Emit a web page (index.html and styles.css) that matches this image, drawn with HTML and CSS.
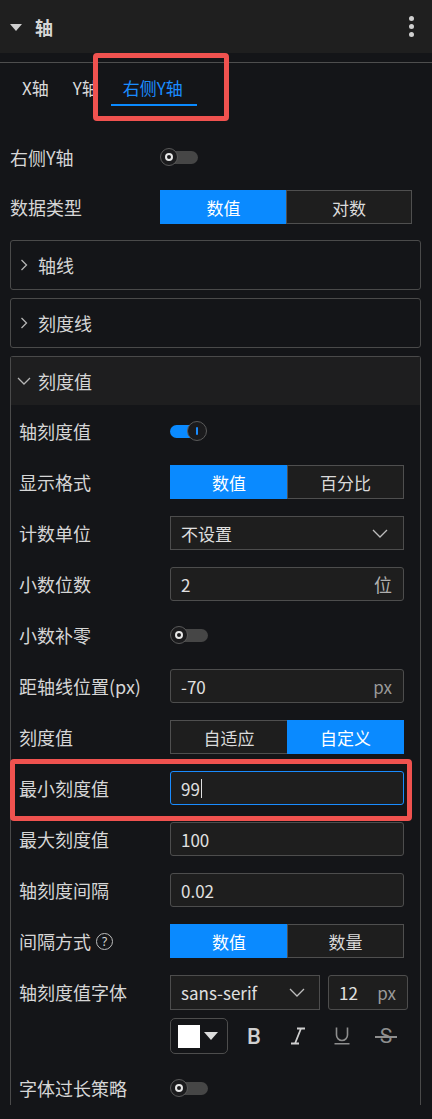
FILE: index.html
```html
<!DOCTYPE html>
<html lang="zh">
<head>
    <meta charset="UTF-8">
    <meta name="viewport" content="width=device-width, initial-scale=1.0">
    <title>轴</title>
    <link rel="stylesheet" href="styles.css">
</head>
<body>
    <div class="bar">
        <span class="bar-caret"></span>
        <span class="bar-title">轴</span>
        <span class="kebab"><i></i><i></i><i></i></span>
    </div>

    <div class="tabs">
        <span class="tab">X轴</span>
        <span class="tab">Y轴</span>
        <span class="tab active mark">右侧Y轴</span>
    </div>

    <div class="content">
        <div class="row">
            <span class="label">右侧Y轴</span>
            <span class="switch"><span class="knob"></span></span>
        </div>
        <div class="row">
            <span class="label">数据类型</span>
            <div class="seg">
                <span class="seg-item on">数值</span>
                <span class="seg-item">对数</span>
            </div>
        </div>

        <div class="panels">
            <section class="panel">
                <div class="panel-head">
                    <svg class="chev-r" width="8" height="12" viewBox="0 0 8 12"><polyline points="1.5,1 6.5,6 1.5,11" fill="none" stroke="#b5b5b5" stroke-width="1.3"/></svg>
                    <span>轴线</span>
                </div>
            </section>
            <section class="panel">
                <div class="panel-head">
                    <svg class="chev-r" width="8" height="12" viewBox="0 0 8 12"><polyline points="1.5,1 6.5,6 1.5,11" fill="none" stroke="#b5b5b5" stroke-width="1.3"/></svg>
                    <span>刻度线</span>
                </div>
            </section>
            <section class="panel open">
                <div class="panel-head">
                    <svg class="chev-d" width="14" height="8" viewBox="0 0 14 8"><polyline points="1,1 7,7 13,1" fill="none" stroke="#b5b5b5" stroke-width="1.3"/></svg>
                    <span>刻度值</span>
                </div>
                <div class="panel-body">
                    <div class="row">
                        <span class="label">轴刻度值</span>
                        <span class="switch on"><span class="knob"></span></span>
                    </div>
                    <div class="row">
                        <span class="label">显示格式</span>
                        <div class="seg">
                            <span class="seg-item on">数值</span>
                            <span class="seg-item">百分比</span>
                        </div>
                    </div>
                    <div class="row">
                        <span class="label">计数单位</span>
                        <div class="field">
                            <span class="value">不设置</span>
                            <svg width="16" height="9" viewBox="0 0 16 9"><polyline points="1,1 8,8 15,1" fill="none" stroke="#bdbdbd" stroke-width="1.3"/></svg>
                        </div>
                    </div>
                    <div class="row">
                        <span class="label">小数位数</span>
                        <div class="field round">
                            <span class="value">2</span>
                            <span class="unit unit-cn">位</span>
                        </div>
                    </div>
                    <div class="row">
                        <span class="label">小数补零</span>
                        <span class="switch"><span class="knob"></span></span>
                    </div>
                    <div class="row">
                        <span class="label">距轴线位置(px)</span>
                        <div class="field round">
                            <span class="value">-70</span>
                            <span class="unit">px</span>
                        </div>
                    </div>
                    <div class="row">
                        <span class="label">刻度值</span>
                        <div class="seg">
                            <span class="seg-item">自适应</span>
                            <span class="seg-item on">自定义</span>
                        </div>
                    </div>
                    <div class="row mark-row">
                        <span class="label">最小刻度值</span>
                        <div class="field round focus">
                            <span class="value">99<span class="caret"></span></span>
                        </div>
                    </div>
                    <div class="row">
                        <span class="label">最大刻度值</span>
                        <div class="field round"><span class="value">100</span></div>
                    </div>
                    <div class="row">
                        <span class="label">轴刻度间隔</span>
                        <div class="field round"><span class="value">0.02</span></div>
                    </div>
                    <div class="row">
                        <span class="label">间隔方式 <span class="help">?</span></span>
                        <div class="seg">
                            <span class="seg-item on">数值</span>
                            <span class="seg-item">数量</span>
                        </div>
                    </div>
                    <div class="row tall">
                        <span class="label">轴刻度值字体</span>
                        <div class="font-ctl">
                            <div class="font-line">
                                <div class="field family">
                                    <span class="value">sans-serif</span>
                                    <svg width="16" height="9" viewBox="0 0 16 9"><polyline points="1,1 8,8 15,1" fill="none" stroke="#bdbdbd" stroke-width="1.3"/></svg>
                                </div>
                                <div class="field round size">
                                    <span class="value">12</span>
                                    <span class="unit">px</span>
                                </div>
                            </div>
                            <div class="style-line">
                                <span class="color-btn">
                                    <span class="swatch"></span>
                                    <svg width="14" height="9" viewBox="0 0 14 9"><polygon points="0,0 14,0 7,8" fill="#dcdcdc"/></svg>
                                </span>
                                <span class="tool bold">B</span>
                                <span class="tool">
                                    <svg width="16" height="18" viewBox="0 0 16 18"><path d="M7 1.5h8M1 16.5h8M11 1.5L5 16.5" fill="none" stroke="#cfcfcf" stroke-width="1.8"/></svg>
                                </span>
                                <span class="tool">
                                    <svg width="16" height="18" viewBox="0 0 16 18"><path d="M2.5 0.5v7.5a5.5 5.5 0 0 0 11 0v-7.5M0.5 16.8h15" fill="none" stroke="#8e8e8e" stroke-width="1.6"/></svg>
                                </span>
                                <span class="tool strike">S</span>
                            </div>
                        </div>
                    </div>
                    <div class="row">
                        <span class="label">字体过长策略</span>
                        <span class="switch"><span class="knob"></span></span>
                    </div>
                </div>
            </section>
        </div>
    </div>
</body>
</html>
```

FILE: styles.css
```css
body {
    margin: 0;
    background: #141518;
    color: #d6d6d6;
    font-family: "Noto Sans CJK SC", "Noto Sans", sans-serif;
    height: 1119px;
    overflow: hidden;
}

.bar {
    height: 53px;
    background: #1f1f1f;
    display: flex;
    align-items: center;
    padding: 0 10px;
}

.bar-caret {
    width: 0;
    height: 0;
    border-left: 6px solid transparent;
    border-right: 6px solid transparent;
    border-top: 7px solid #cfcfcf;
    margin-top: 2px;
}

.bar-title {
    margin-left: 13px;
    font-size: 18px;
    font-weight: bold;
    line-height: 24px;
}

.kebab {
    margin-left: auto;
    display: flex;
    flex-direction: column;
    gap: 3px;
    margin-right: 8px;
}

.kebab i {
    width: 5px;
    height: 5px;
    border-radius: 50%;
    background: #d0d0d0;
}

.tabs {
    margin-top: 9px;
    border-top: 1px solid #4e4e4e;
    display: flex;
    padding-left: 10px;
}

.tab {
    padding: 13px 12px 4px;
    font-size: 17px;
    line-height: 24px;
    border-bottom: 2px solid transparent;
    color: #dadada;
}

.tab.active {
    color: #1a8cff;
    border-bottom-color: #0a8aff;
    padding-right: 14px;
}

.mark {
    position: relative;
}

.mark::after,
.mark-row::after {
    content: "";
    position: absolute;
    border: 5px solid #f0524f;
    border-radius: 4px;
}

.mark::after {
    top: -10px;
    left: -18px;
    right: -32px;
    bottom: -17px;
}

.content {
    padding: 34px 11px 0 10px;
    display: flex;
    flex-direction: column;
    gap: 16px;
}

.row {
    display: grid;
    grid-template-columns: 150px 1fr;
    align-items: center;
    height: 34px;
    margin-right: 9px;
}

.label {
    font-size: 18px;
    line-height: 24px;
    display: flex;
    align-items: center;
    white-space: nowrap;
}

.help {
    width: 15px;
    height: 15px;
    border: 1.5px solid #bdbdbd;
    border-radius: 50%;
    font-size: 12px;
    line-height: 15px;
    text-align: center;
    margin-left: 5px;
    font-family: "Noto Sans", sans-serif;
}

/* switch */
.switch {
    position: relative;
    width: 38px;
    height: 19px;
}

.switch::before {
    content: "";
    position: absolute;
    left: 6px;
    right: 0;
    top: 3px;
    height: 13px;
    border-radius: 7px;
    background: #464646;
}

.knob {
    position: absolute;
    left: 0;
    top: 0;
    width: 16px;
    height: 16px;
    border-radius: 50%;
    border: 1.5px solid #5a5a5a;
    background: #1b1b1d;
}

.knob::after {
    content: "";
    position: absolute;
    left: 4px;
    top: 4px;
    width: 4px;
    height: 4px;
    border: 2px solid #e6e6e6;
    border-radius: 50%;
}

.switch.on::before {
    left: 0;
    right: 12px;
    background: #0a8aff;
}

.switch.on .knob {
    left: 17px;
    top: -1px;
    width: 18px;
    height: 18px;
}

.switch.on .knob::after {
    left: 8px;
    top: 5px;
    width: 2px;
    height: 8px;
    border: none;
    border-radius: 1px;
    background: #1a8cff;
}

/* segmented */
.seg {
    display: grid;
    grid-template-columns: 1fr 1fr;
    height: 34px;
}

.seg-item {
    display: flex;
    align-items: center;
    justify-content: center;
    font-size: 17px;
    background: #1e1e1e;
    border: 1px solid #4f4f4f;
    color: #dadada;
}

.seg-item:first-child {
    border-right: none;
}

.seg-item.on {
    background: #0a8aff;
    border-color: #0a8aff;
    color: #fff;
}

/* fields */
.field {
    height: 32px;
    background: #1e1e1e;
    border: 1px solid #4d4d4d;
    display: flex;
    align-items: center;
    padding: 0 15px 0 10px;
}

.field.round {
    border-radius: 3px;
}

.field svg {
    margin-left: auto;
}

.value {
    font-size: 17px;
    color: #e0e0e0;
    display: flex;
    align-items: center;
}

.unit {
    margin-left: auto;
    font-size: 17px;
    color: #9a9a9a;
    margin-right: -4px;
}

.unit-cn {
    color: #b0b0b0;
    font-size: 18px;
}

.field.focus {
    border-color: #1a8cff;
}

.caret {
    width: 1px;
    height: 19px;
    background: #e0e0e0;
    margin-left: 1px;
}

.mark-row {
    position: relative;
}

.mark-row::after {
    top: -12px;
    bottom: -16px;
    left: -9px;
    right: -8px;
}

/* panels */
.panels {
    display: flex;
    flex-direction: column;
    gap: 8px;
}

.panel {
    border: 1px solid #4a4a4a;
    border-radius: 3px;
}

.panel-head {
    height: 48px;
    display: flex;
    align-items: center;
    padding-left: 9px;
    font-size: 18px;
    gap: 10px;
}

.panel.open {
    border-bottom: none;
    border-radius: 3px 3px 0 0;
}

.panel.open .panel-head {
    background: #1e1e1f;
    padding-left: 6px;
    gap: 7px;
}

.panel-body {
    padding: 9px 16px 0 8px;
    display: flex;
    flex-direction: column;
    gap: 17px;
}

.panel-body .row {
    grid-template-columns: 151px 1fr;
    margin-right: 0;
}

.row.tall {
    height: auto;
    align-items: start;
}

.row.tall .label {
    margin-top: 5px;
}

.font-ctl {
    display: flex;
    flex-direction: column;
    gap: 8px;
}

.font-line {
    display: flex;
    gap: 8px;
}

.family {
    width: 124px;
    height: 33px;
    padding-right: 14px;
}

.size {
    flex: 1;
    height: 33px;
}

.style-line {
    display: flex;
    align-items: center;
    height: 36px;
}

.color-btn {
    border: 1px solid #4d4d4d;
    border-radius: 5px;
    display: flex;
    align-items: center;
    padding-left: 7px;
    box-sizing: border-box;
    width: 58px;
    height: 36px;
    gap: 4px;
}

.swatch {
    width: 22px;
    height: 23px;
    background: #fff;
}

.tool {
    width: 44px;
    display: flex;
    justify-content: center;
    align-items: center;
    font-family: Roboto, "Noto Sans", sans-serif;
    font-size: 22px;
    color: #d0d0d0;
}

.color-btn + .tool {
    margin-left: 4px;
}

.bold {
    font-weight: 500;
}

.strike {
    color: #8e8e8e;
    position: relative;
    font-size: 21px;
}

.strike::after {
    content: "";
    position: absolute;
    left: 11px;
    right: 11px;
    top: 50%;
    height: 1.6px;
    background: #8e8e8e;
}
```
